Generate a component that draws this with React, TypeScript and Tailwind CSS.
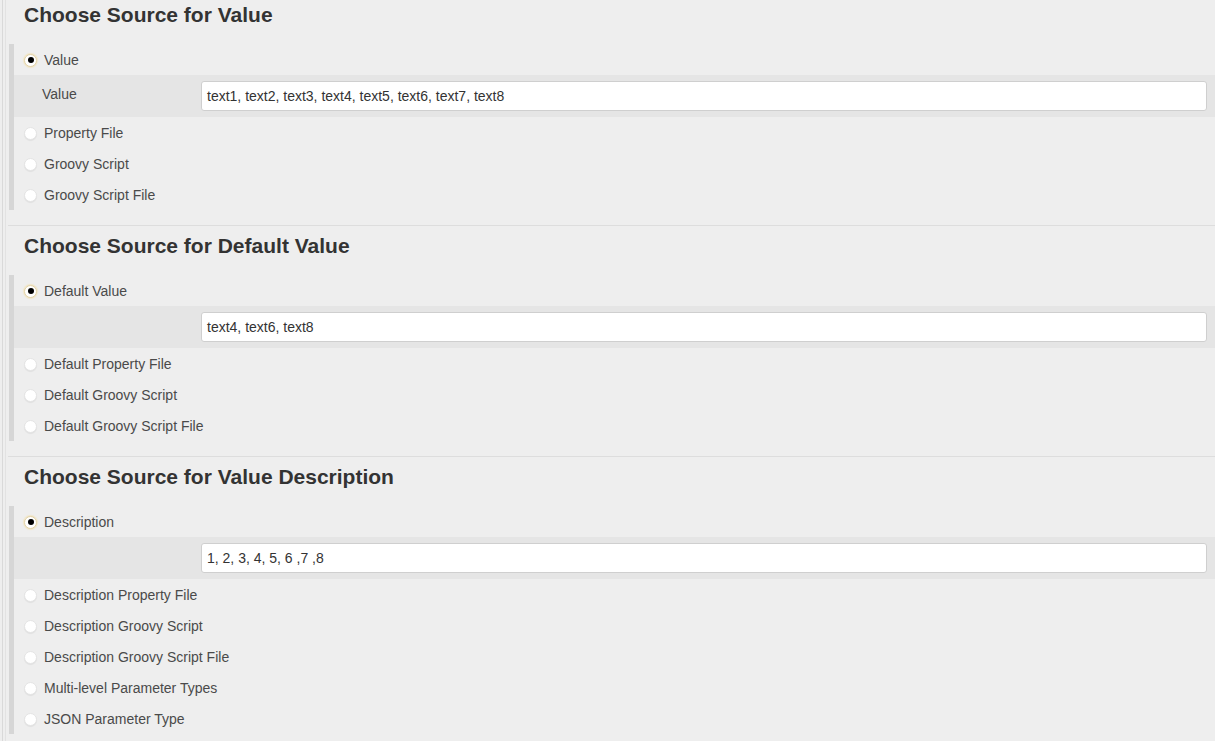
import React from "react";

type Section = {
  title: string;
  options: string[];
  bandLabel: string;
  bandValue: string;
};

const sections: Section[] = [
  {
    title: "Choose Source for Value",
    options: ["Value", "Property File", "Groovy Script", "Groovy Script File"],
    bandLabel: "Value",
    bandValue: "text1, text2, text3, text4, text5, text6, text7, text8",
  },
  {
    title: "Choose Source for Default Value",
    options: ["Default Value", "Default Property File", "Default Groovy Script", "Default Groovy Script File"],
    bandLabel: "",
    bandValue: "text4, text6, text8",
  },
  {
    title: "Choose Source for Value Description",
    options: [
      "Description",
      "Description Property File",
      "Description Groovy Script",
      "Description Groovy Script File",
      "Multi-level Parameter Types",
      "JSON Parameter Type",
    ],
    bandLabel: "",
    bandValue: "1, 2, 3, 4, 5, 6 ,7 ,8",
  },
];

function Radio({ checked }: { checked: boolean }) {
  if (checked) {
    return (
      <span className="flex h-[13px] w-[13px] shrink-0 items-center justify-center rounded-full border border-[#e2d2a8] bg-white shadow-[0_0_1px_1px_#f1e6c8]">
        <span className="h-[6px] w-[6px] rounded-full bg-black" />
      </span>
    );
  }
  return (
    <span className="h-[13px] w-[13px] shrink-0 rounded-full border border-[#e4e4e4] bg-white shadow-[0_1px_1px_rgba(0,0,0,0.06)]" />
  );
}

function OptionRow({ label, checked }: { label: string; checked: boolean }) {
  return (
    <div className="flex h-[31px] items-center gap-[7px] pl-[10px] pt-[1px]">
      <Radio checked={checked} />
      <span className="text-[14px] text-[#4a4a4a]">{label}</span>
    </div>
  );
}

function SectionBlock({ s, last }: { s: Section; last: boolean }) {
  return (
    <div>
      <h2 className="h-[30px] pl-[16px] text-[21px] font-bold leading-[30px] text-[#333]">{s.title}</h2>
      <div className="ml-[1px] mt-[14px] border-l-[5px] border-[#d6d6d6]">
        <OptionRow label={s.options[0]} checked />
        <div className="flex h-[42px] items-center bg-[#e5e5e5] pr-[8px]">
          <div className="w-[187px] shrink-0 pb-[3px] pl-[28px] text-[14px] text-[#4a4a4a]">{s.bandLabel}</div>
          <div className="flex h-[30px] flex-1 items-center rounded-[3px] border border-[#cfcfcf] bg-white px-[5px] text-[14px] text-[#333]">
            {s.bandValue}
          </div>
        </div>
        {s.options.slice(1).map((o) => (
          <OptionRow key={o} label={o} checked={false} />
        ))}
      </div>
      {!last && <div className="mt-[15px] mb-[5px] border-t border-[#dddddd]" />}
    </div>
  );
}

export default function App() {
  return (
    <div
      className="min-h-screen bg-[#eeeeee] pl-[2px]"
      style={{ fontFamily: '"Liberation Sans", Arial, sans-serif' }}
    >
      <div className="min-h-screen border-l border-[#d9d9d9] pl-[2px]">
        <div className="min-h-screen border-l border-[#e2e2e2] pl-[2px]">
          {sections.map((s, i) => (
            <SectionBlock key={s.title} s={s} last={i === sections.length - 1} />
          ))}
        </div>
      </div>
    </div>
  );
}
